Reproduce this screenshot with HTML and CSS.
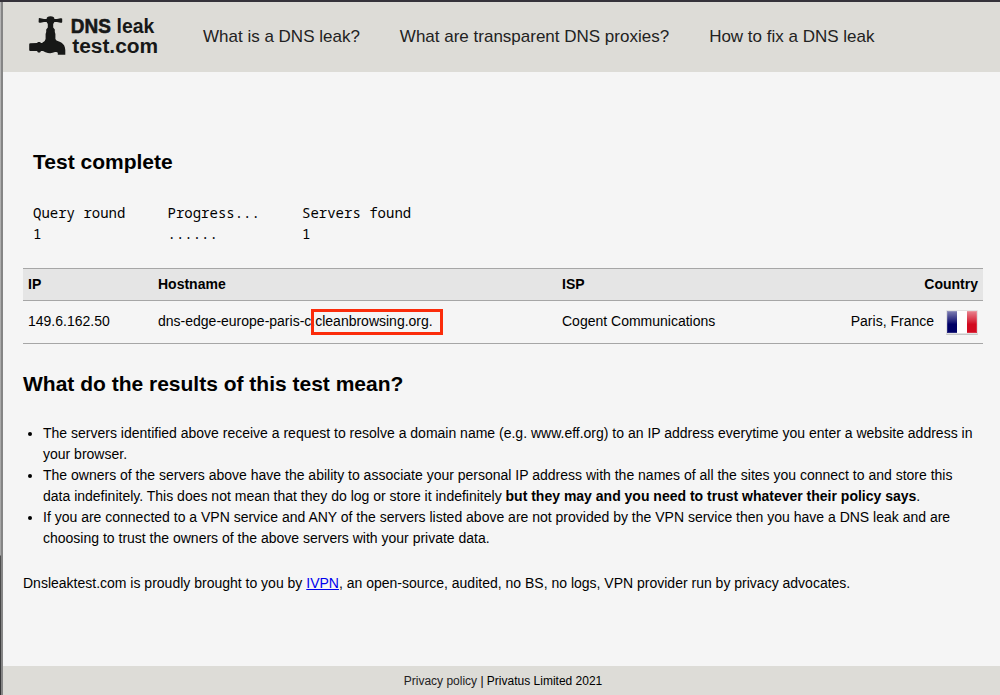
FILE: index.html
```html
<!DOCTYPE html>
<html lang="en">
<head>
<meta charset="utf-8">
<title>DNS leak test</title>
<link rel="stylesheet" href="styles.css">
</head>
<body>
<div class="window">
  <header class="header">
    <svg class="logo" width="136" height="46" viewBox="0 0 136 46" role="img" aria-label="DNS leak test.com">
      <g fill="#171817">
        <path d="M12.8 6.2Q13.4 5.8 14.6 6.2L18 6.9H20.6Q20.6 4.3 24.5 4.2Q28.4 4.3 28.4 6.9H31L34.4 6.2Q36.2 5.9 36.2 6.8V10Q36 11.2 34.4 10.7L31 9.9H28.4L27.2 12V15.5L28.8 17.5V20L29.4 22V27Q29.8 28.6 33 29.5Q38 31.3 38.9 35.5L39.3 38V42.8H31.8V41Q31.5 39.5 29 40Q24.5 42.2 19.5 40.2L17 39H15L14 40.4H12L11 39H4.3Q3.2 39 3.2 38V32.4Q3.2 31.2 4.3 31.2L11 31L12 29.9H14L15 31H16Q19.6 29 19.6 27V22L20.2 20V17.5L21.8 15.5V12L20.6 9.9H18L14.6 10.7Q12.6 11 12.6 10Z"/>
        <text class="logo-dns" x="44.8" y="21.3" textLength="40" lengthAdjust="spacingAndGlyphs">DNS</text>
        <text class="logo-text" x="90.5" y="21.3" textLength="37.8" lengthAdjust="spacingAndGlyphs">leak</text>
        <text class="logo-text" x="46.2" y="41" textLength="86" lengthAdjust="spacingAndGlyphs">test.com</text>
      </g>
    </svg>
    <nav class="nav">
      <a>What is a DNS leak?</a>
      <a>What are transparent DNS proxies?</a>
      <a>How to fix a DNS leak</a>
    </nav>
  </header>

  <main class="content">
    <h2 class="title">Test complete</h2>
    <div class="progress">
      <span>Query round</span><span>Progress...</span><span>Servers found</span>
      <span>1</span><span>......</span><span>1</span>
    </div>

    <div class="table">
      <div class="row head">
        <span>IP</span><span>Hostname</span><span>ISP</span><span class="country">Country</span>
      </div>
      <div class="row result">
        <span>149.6.162.50</span>
        <span class="host">dns-edge-europe-paris-c.cleanbrowsing.org.<i class="highlight"></i></span>
        <span>Cogent Communications</span>
        <span class="country">Paris, France
          <svg class="flag" width="32" height="26" viewBox="0 0 32 26">
            <defs>
              <linearGradient id="gloss" x1="0" y1="0" x2="0" y2="1">
                <stop offset="0" stop-color="#fff" stop-opacity=".5"/>
                <stop offset=".5" stop-color="#fff" stop-opacity=".1"/>
                <stop offset=".6" stop-color="#fff" stop-opacity="0"/>
              </linearGradient>
            </defs>
            <rect x="0" y="1" width="32" height="24" rx="1" fill="#c6c6c6"/>
            <rect x="0" y="0" width="32" height="24" rx="1" fill="#e2e2e2"/>
            <rect x="1" y="1" width="10" height="22" fill="#000066"/>
            <rect x="11" y="1" width="10" height="22" fill="#fff"/>
            <rect x="21" y="1" width="10" height="22" fill="#d20a20"/>
            <rect x="1" y="1" width="10" height="22" fill="url(#gloss)"/>
            <rect x="21" y="1" width="10" height="22" fill="url(#gloss)"/>
            <rect x="1.5" y="1.5" width="29" height="21" fill="none" stroke="#fff" stroke-opacity=".16"/>
          </svg>
        </span>
      </div>
    </div>

    <h2 class="question">What do the results of this test mean?</h2>
    <ul class="notes">
      <li>The servers identified above receive a request to resolve a domain name (e.g. www.eff.org) to an IP address everytime you enter a website address in<br>your browser.</li>
      <li>The owners of the servers above have the ability to associate your personal IP address with the names of all the sites you connect to and store this<br>data indefinitely. This does not mean that they do log or store it indefinitely <b>but they may and you need to trust whatever their policy says</b>.</li>
      <li>If you are connected to a VPN service and ANY of the servers listed above are not provided by the VPN service then you have a DNS leak and are<br>choosing to trust the owners of the above servers with your private data.</li>
    </ul>
    <p class="credit">Dnsleaktest.com is proudly brought to you by <a class="link">IVPN</a>, an open-source, audited, no BS, no logs, VPN provider run by privacy advocates.</p>
  </main>

  <footer class="footer"><span class="policy">Privacy policy</span>&nbsp;| Privatus Limited 2021</footer>
</div>
</body>
</html>
```
FILE: styles.css
```css
* { box-sizing: border-box; }
body {
  margin: 0;
  height: 695px;
  overflow: hidden;
  padding: 2px 0 0 3px;
  background:
    linear-gradient(#35323a, #35323a) 0 0 / 100% 2px no-repeat,
    linear-gradient(#858585, #858585) 1px 0 / 2px 100% no-repeat,
    linear-gradient(#b5b5b5 0, #a6a6a6 555px, #505050 556px, #343436 695px) 0 0 / 1px 100% no-repeat,
    #f5f5f5;
  font: 14px/21px "Liberation Sans", Arial, sans-serif;
  color: #000;
}
.window { display: flex; flex-direction: column; height: 693px; }
.header {
  display: flex;
  height: 70px;
  padding: 10px 0 0 23px;
  background: #dddcd7;
}
.logo { flex: none; }
.logo-dns { font: bold 20px "Liberation Sans", Arial, sans-serif; stroke: #171817; stroke-width: .6px; }
.logo-text { font: bold 20px "Liberation Sans", Arial, sans-serif; }
.nav {
  display: flex;
  gap: 40px;
  padding: 13px 0 0 41px;
  font-size: 17px;
  line-height: 24px;
  color: #222;
  white-space: nowrap;
}
.content { flex: 1; width: 980px; padding: 76px 0 0 20px; }
h2 { margin: 0; font-size: 21px; line-height: 28px; }
.title { padding-left: 10px; }
.progress {
  display: grid;
  grid-template-columns: 134.5px 134.5px 150px;
  padding: 26px 0 0 10px;
  font-family: "Noto Sans Mono", "DejaVu Sans Mono", monospace;
}
.table { width: 960px; margin-top: 24px; }
.row {
  display: grid;
  grid-template-columns: 130px 404px 250px 1fr;
  align-items: center;
  height: 43px;
  padding: 0 5px;
  border-bottom: 1px solid #a6a6a6;
}
.head {
  height: 33px;
  border-top: 1px solid #a6a6a6;
  background: #e5e5e5;
  font-weight: bold;
}
.result { padding-bottom: 2px; }
.country { display: flex; justify-content: flex-end; align-items: center; gap: 12px; }
.flag { margin: 3px 0 0; }
.host { position: relative; }
.highlight {
  position: absolute;
  left: 152.5px;
  top: -2px;
  width: 132px;
  height: 26px;
  border: 3px solid #fb2c0b;
}
.question { margin-top: 26px; }
.notes { margin: 25px 0 0; padding-left: 20px; white-space: nowrap; }
.credit { margin: 24px 0 0; white-space: nowrap; }
.link { color: #0000ee; text-decoration: underline; }
.footer {
  height: 29px;
  padding: 5px 0 0 3px;
  background: #dddcd7;
  text-align: center;
  font-size: 12px;
  line-height: 20px;
}
.policy { color: #222; }
```
